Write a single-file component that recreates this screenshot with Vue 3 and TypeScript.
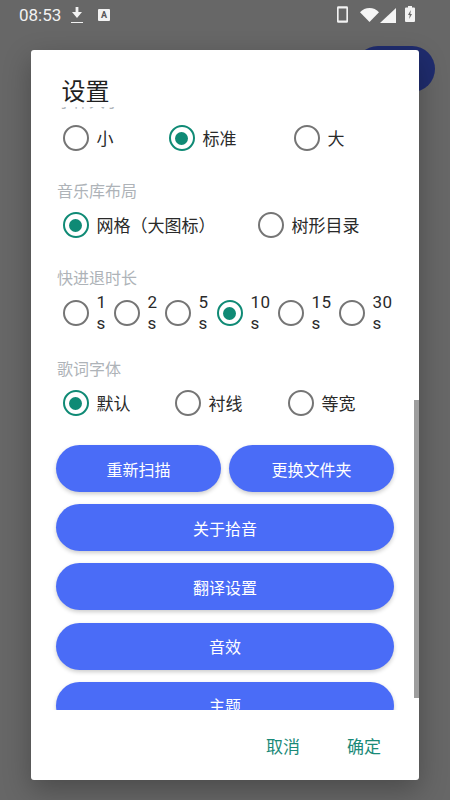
<script setup lang="ts">
interface Opt { label: string; second?: string; width: number; on?: boolean }
const size: Opt[] = [
  { label: '小', width: 106 },
  { label: '标准', width: 125, on: true },
  { label: '大', width: 90 },
]
const layout: Opt[] = [
  { label: '网格（大图标）', width: 195, on: true },
  { label: '树形目录', width: 130 },
]
const skip: Opt[] = [
  { label: '1', second: 's', width: 51 },
  { label: '2', second: 's', width: 51 },
  { label: '5', second: 's', width: 52 },
  { label: '10', second: 's', width: 61, on: true },
  { label: '15', second: 's', width: 61 },
  { label: '30', second: 's', width: 50 },
]
const lyric: Opt[] = [
  { label: '默认', width: 112, on: true },
  { label: '衬线', width: 113 },
  { label: '等宽', width: 100 },
]
const groups = [
  { title: '音乐库布局', opts: layout, tall: false },
  { title: '快进退时长', opts: skip, tall: true },
  { title: '歌词字体', opts: lyric, tall: false },
]
</script>

<template>
  <div class="screen">
    <div class="behind"></div>
    <header class="status">
      <span class="time">08:53</span>
      <svg viewBox="0 0 12 16" width="12" height="16">
        <path d="M4.600 0h2.800v5H11L6 11 1 5h3.600z" fill="#f2f2f2" />
        <rect x="0" y="15" width="12" height="1.200" fill="#f2f2f2" />
      </svg>
      <span class="ic-a">A</span>
      <span class="grow"></span>
      <svg class="ic-phone" viewBox="0 0 12 18" width="11" height="17">
        <path fill-rule="evenodd" d="M1.500 0h9A1.500 1.500 0 0 1 12 1.500v15a1.500 1.500 0 0 1-1.500 1.500h-9A1.500 1.500 0 0 1 0 16.500v-15A1.500 1.500 0 0 1 1.500 0zM1.800 2.400v13.200h8.400V2.400z" fill="#f2f2f2" />
      </svg>
      <svg class="ic-wifi" viewBox="0 0 19 14" width="19" height="14">
        <path d="M0 4.200C2.500 1.600 5.800 0 9.500 0S16.500 1.600 19 4.200L9.500 14z" fill="#f5f5f5" />
      </svg>
      <svg class="ic-sig" viewBox="0 0 16 15" width="16" height="15">
        <path d="M16 0v15H0z" fill="#f5f5f5" />
      </svg>
      <svg class="ic-bat" viewBox="0 0 10 16" width="10" height="16">
        <path d="M3 0h4v1.500h2a1 1 0 0 1 1 1V15a1 1 0 0 1-1 1H1a1 1 0 0 1-1-1V2.500a1 1 0 0 1 1-1h2z" fill="#f2f2f2" />
        <path d="M5.800 4 3 9h1.700l-.5 4L7 8H5.300z" fill="#666" />
      </svg>
    </header>

    <section class="dialog">
      <h1 class="title">设置</h1>
      <div class="scroll">
        <div class="group first">
          <div class="label">字体大小</div>
          <div class="row">
            <label v-for="o in size" :key="o.label" class="opt" :style="{ width: o.width + 'px' }">
              <i class="radio" :class="{ on: o.on }"></i>
              <span class="txt">{{ o.label }}</span>
            </label>
          </div>
        </div>
        <div v-for="g in groups" :key="g.title" class="group">
          <div class="label">{{ g.title }}</div>
          <div class="row" :class="{ tall: g.tall }">
            <label v-for="o in g.opts" :key="o.label" class="opt" :style="{ width: o.width + 'px' }">
              <i class="radio" :class="{ on: o.on }"></i>
              <span class="txt" :class="{ wrap: o.second }">{{ o.label }}<template v-if="o.second"><br />{{ o.second }}</template></span>
            </label>
          </div>
        </div>
        <div class="buttons">
          <div class="pair">
            <button class="btn">重新扫描</button>
            <button class="btn">更换文件夹</button>
          </div>
          <button class="btn">关于拾音</button>
          <button class="btn">翻译设置</button>
          <button class="btn">音效</button>
          <button class="btn">主题</button>
        </div>
      </div>
      <div class="thumb"></div>
      <footer class="foot">
        <span class="act">取消</span>
        <span class="act">确定</span>
      </footer>
    </section>
  </div>
</template>

<style>
html, body { margin: 0; padding: 0; }
</style>

<style scoped>
.screen {
  position: relative;
  width: 450px;
  height: 800px;
  overflow: hidden;
  background: #676767;
  font-family: "Noto Sans CJK SC", Roboto, sans-serif;
}
.behind {
  position: absolute;
  left: 355px;
  top: 46px;
  width: 80px;
  height: 46px;
  border-radius: 23px;
  background: #1f2c6e;
}
.status {
  position: relative;
  display: flex;
  align-items: center;
  height: 30px;
  padding: 0 35px 0 19px;
  color: #f2f2f2;
}
.time { font: 17px/30px Roboto, sans-serif; width: 52px; }
.ic-a {
  width: 12px;
  height: 12px;
  margin-left: 15px;
  background: #f2f2f2;
  color: #555;
  font: bold 9px/12px Roboto, sans-serif;
  text-align: center;
  border-radius: 1px;
}
.grow { flex: 1; }
.ic-phone { margin-top: -1px; }
.ic-wifi { margin-left: 12px; }
.ic-sig { margin-left: 1px; }
.ic-bat { margin-left: 9px; margin-top: -2px; }
.dialog {
  position: relative;
  width: 388px;
  height: 730px;
  margin: 20px 0 0 31px;
  background: #fff;
  border-radius: 3px;
  box-shadow: 0 10px 28px rgba(0, 0, 0, 0.28);
  display: flex;
  flex-direction: column;
}
.title {
  margin: 0;
  height: 57px;
  padding: 22px 0 0 30.500px;
  box-sizing: border-box;
  font-size: 24px;
  line-height: 36px;
  font-weight: 400;
  color: #1f1f1f;
}
.scroll {
  height: 603px;
  overflow: hidden;
  padding: 0 25px;
}
.group { padding-top: 19px; }
.group.first { padding-top: 0; margin-top: -17px; }
.group.first .label { margin-bottom: 3px; }
.label {
  height: 22px;
  padding-left: 1px;
  font-size: 16px;
  line-height: 21px;
  color: #aeb3b8;
}
.row {
  display: flex;
  align-items: center;
  height: 46px;
  padding-left: 6.500px;
}
.row.tall { height: 48px; margin-bottom: 2px; }
.opt {
  display: flex;
  align-items: center;
  flex: none;
}
.radio {
  flex: none;
  box-sizing: border-box;
  width: 26px;
  height: 26px;
  border: 2.800px solid #757575;
  border-radius: 50%;
  margin-right: 8px;
  display: flex;
  align-items: center;
  justify-content: center;
}
.radio.on { border-color: #0f8a75; }
.radio.on::after {
  content: "";
  width: 13px;
  height: 13px;
  border-radius: 50%;
  background: #0f8a75;
}
.txt {
  font-size: 17px;
  line-height: 24px;
  color: #2a2a2a;
  white-space: nowrap;
}
.txt.wrap {
  font-family: Roboto, sans-serif;
  line-height: 21px;
  letter-spacing: 0.400px;
}
.buttons {
  display: flex;
  flex-direction: column;
  gap: 12.200px;
  padding-top: 19px;
}
.pair {
  display: flex;
  gap: 8px;
}
.pair .btn { flex: 1; }
.btn {
  height: 47px;
  border: 0;
  border-radius: 23.500px;
  background: #4a6cf7;
  color: #fff;
  font: 16px "Noto Sans CJK SC", sans-serif;
  box-shadow: 0 2px 4px rgba(0, 0, 0, 0.2);
  padding: 0;
}
.thumb {
  position: absolute;
  right: 0;
  top: 350px;
  width: 5px;
  height: 298px;
  background: #9d9d9d;
}
.foot {
  flex: 1;
  display: flex;
  justify-content: flex-end;
  align-items: center;
  gap: 47px;
  padding: 0 38px 0 0;
}
.act {
  font-size: 17px;
  color: #1a8a78;
}
</style>
